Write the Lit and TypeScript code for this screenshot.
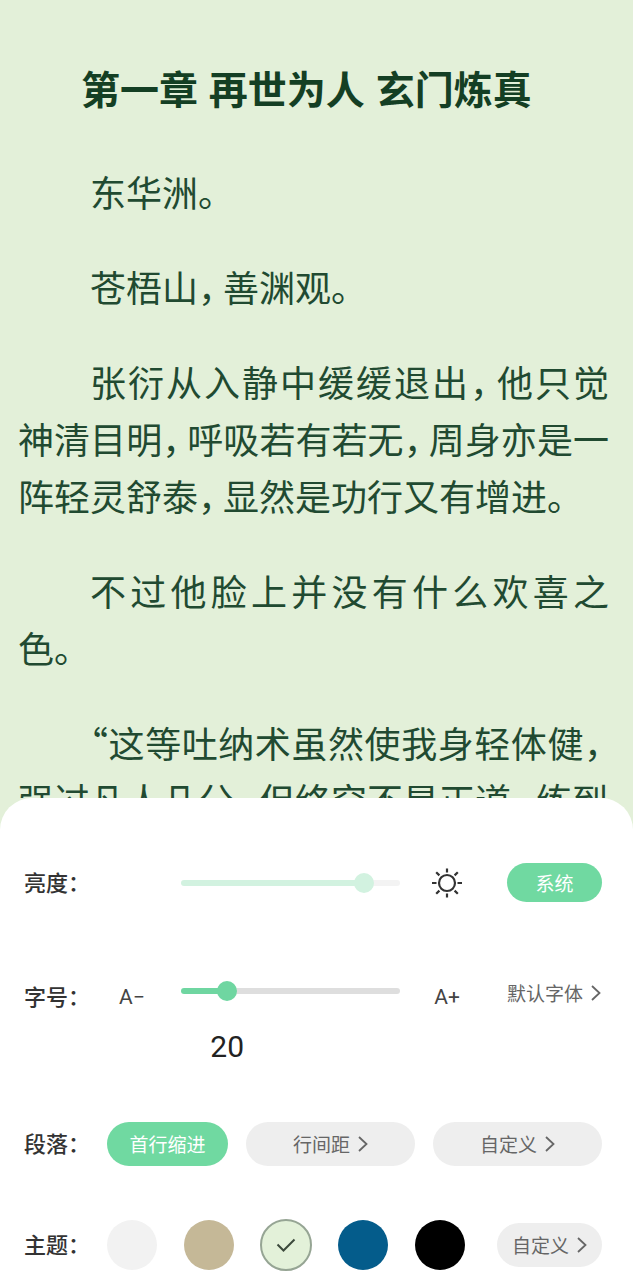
import { LitElement, html, css, svg } from "lit";
import { customElement, property, state } from "lit/decorators.js";
import { styleMap } from "lit/directives/style-map.js";

const CHAPTER = {
  title: "第一章 再世为人 玄门炼真",
  paragraphs: [
    "东华洲。",
    "苍梧山，善渊观。",
    "张衍从入静中缓缓退出，他只觉神清目明，呼吸若有若无，周身亦是一阵轻灵舒泰，显然是功行又有增进。",
    "不过他脸上并没有什么欢喜之色。",
    "“这等吐纳术虽然使我身轻体健，强过凡人几分，但终究不是正道，练到",
  ],
};

const THEMES = [
  { id: "light", name: "浅灰", color: "#f2f2f2" },
  { id: "sand", name: "羊皮纸", color: "#c5b897" },
  { id: "green", name: "护眼绿", color: "#e3f1d9" },
  { id: "blue", name: "深蓝", color: "#045c8b" },
  { id: "black", name: "夜间", color: "#000000" },
];

const chevron = html`<svg class="chevron" viewBox="0 0 10 16" aria-hidden="true">
  ${svg`<path d="M1 1 L8.5 8 L1 15" fill="none" stroke="currentColor" stroke-width="1.8"/>`}
</svg>`;

const sun = html`<svg class="sun" viewBox="0 0 32 32" role="img" aria-label="亮度">
  ${svg`<g fill="none" stroke="#333" stroke-width="2.2">
    <circle cx="16" cy="16" r="8"/>
    <path d="M16 1.5v4M16 26.5v4M1 16h4.5M26.5 16H31M5.2 5.2l3.2 3.2M23.6 23.6l3.2 3.2M26.8 5.2l-3.2 3.2M8.4 23.6l-3.2 3.2"/>
  </g>`}
</svg>`;

@customElement("reader-page")
class ReaderPage extends LitElement {
  static styles = css`
    :host {
      display: block;
      box-sizing: border-box;
      padding: 62px 24px 0 18px;
      overflow: hidden;
      color: #214a31;
      font-family: "Noto Sans CJK SC", sans-serif;
    }
    .title {
      margin: 0 0 44px;
      padding-left: 63px;
      font: 700 39px/57px "Liberation Sans", "Noto Sans CJK SC", sans-serif;
      color: #143f24;
    }
    .para {
      margin: 0 0 38px;
      font-size: 36px;
      line-height: 57px;
      text-indent: 2em;
      text-align: justify;
    }
    .comma {
      font-feature-settings: "halt";
      margin-right: 7px;
    }
    .quote {
      font-feature-settings: "halt";
    }
  `;

  private mark(text: string) {
    return text.split(/([，“])/).map((part) =>
      part === "，"
        ? html`<span class="comma">，</span>`
        : part === "“"
          ? html`<span class="quote">“</span>`
          : part
    );
  }

  render() {
    return html`<h1 class="title">${CHAPTER.title}</h1>
      ${CHAPTER.paragraphs.map((p) => html`<p class="para">${this.mark(p)}</p>`)}`;
  }
}

@customElement("settings-sheet")
class SettingsSheet extends LitElement {
  @property({ type: Number }) fontSize = 20;
  @state() private brightness = 87;
  @state() private theme = "green";

  static styles = css`
    :host {
      display: block;
      box-sizing: border-box;
      padding: 65px 31px 16px 24px;
      background: #fff;
      border-radius: 32px 32px 0 0;
      color: #333;
      font-family: "Noto Sans CJK SC", sans-serif;
    }
    .row {
      display: grid;
      grid-template-columns: 95px 62px minmax(0, 1fr) 94px 108px;
      align-items: center;
    }
    .brightness {
      height: 39px;
      margin-bottom: 79px;
    }
    .brightness .slider {
      grid-column: 3;
    }
    .size {
      align-items: start;
      margin-bottom: 57px;
    }
    .line {
      display: flex;
      align-items: center;
    }
    .paragraph {
      gap: 18px;
      height: 44px;
      margin-bottom: 53px;
    }
    .paragraph .label {
      width: 65px;
      flex: none;
    }
    .themes {
      height: 52px;
      justify-content: space-between;
    }
    .themes .label {
      width: 57px;
    }
    .label {
      padding-bottom: 4px;
      font-size: 22px;
      line-height: 28px;
      font-weight: 500;
      white-space: nowrap;
      font-feature-settings: "halt";
    }
    button {
      display: flex;
      align-items: center;
      justify-content: center;
      gap: 8px;
      margin: 0;
      padding: 0;
      border: 0;
      background: none;
      color: #666;
      font: 400 19px/24px "Noto Sans CJK SC", sans-serif;
      white-space: nowrap;
      cursor: pointer;
    }
    .pill {
      height: 44px;
      border-radius: 22px;
      background: #eee;
    }
    .pill.on {
      background: #70d9a1;
      color: #fff;
    }
    .system {
      height: 39px;
      margin-left: 13px;
    }
    .indent {
      width: 121px;
      flex: none;
    }
    .wide {
      flex: 1;
    }
    .custom {
      width: 105px;
    }
    .font {
      margin-left: 13px;
      justify-self: start;
    }
    .step {
      color: #444;
      font: 400 21px/32px Roboto, sans-serif;
    }
    .minus {
      justify-self: start;
    }
    .plus {
      justify-self: center;
    }
    .chevron {
      width: 10px;
      height: 16px;
    }
    .sun {
      width: 32px;
      height: 32px;
      justify-self: center;
    }
    .slider {
      --fill: #6fd6a1;
      --track: #dedede;
      appearance: none;
      width: 100%;
      height: 20px;
      margin: 0;
      background: none;
    }
    .slider.faint {
      --fill: #d2f2e0;
      --track: #f3f3f3;
    }
    .slider::-webkit-slider-runnable-track {
      height: 6px;
      border-radius: 3px;
      background: linear-gradient(
        to right,
        var(--fill) calc(10px + (100% - 20px) * var(--ratio)),
        var(--track) calc(10px + (100% - 20px) * var(--ratio))
      );
    }
    .slider::-webkit-slider-thumb {
      appearance: none;
      width: 20px;
      height: 20px;
      margin-top: -7px;
      border-radius: 50%;
      background: var(--fill);
    }
    .value {
      grid-column: 3;
      justify-self: start;
      width: 36px;
      margin-top: 16px;
      margin-left: calc((100% - 20px) * var(--ratio) - 8px);
      text-align: center;
      color: #222;
      font: 400 30px/36px Roboto, sans-serif;
    }
    .choices {
      display: flex;
      align-items: center;
      gap: 25px;
    }
    .swatch {
      position: relative;
      display: grid;
      place-items: center;
      width: 52px;
      height: 52px;
    }
    .swatch input {
      appearance: none;
      width: 50px;
      height: 50px;
      margin: 0;
      border-radius: 50%;
      background: var(--swatch);
      cursor: pointer;
    }
    .swatch input:checked {
      width: 52px;
      height: 52px;
      border: 2px solid #96a594;
    }
    .check {
      position: absolute;
      width: 20px;
      height: 16px;
      pointer-events: none;
    }
  `;

  render() {
    const bright = { "--ratio": String(this.brightness / 100) };
    const size = { "--ratio": String((this.fontSize - 12) / 44) };
    return html`
      <div class="row brightness">
        <label class="label" for="brightness">亮度：</label>
        <input
          class="slider faint"
          id="brightness"
          type="range"
          min="0"
          max="100"
          .value=${String(this.brightness)}
          style=${styleMap(bright)}
          @input=${(e: Event) => (this.brightness = Number((e.target as HTMLInputElement).value))}
        />
        ${sun}
        <button class="pill on system">系统</button>
      </div>

      <div class="row size">
        <label class="label" for="size">字号：</label>
        <button class="step minus" @click=${() => (this.fontSize = Math.max(12, this.fontSize - 1))}>A−</button>
        <input
          class="slider"
          id="size"
          type="range"
          min="12"
          max="56"
          .value=${String(this.fontSize)}
          style=${styleMap(size)}
          @input=${(e: Event) => (this.fontSize = Number((e.target as HTMLInputElement).value))}
        />
        <button class="step plus" @click=${() => (this.fontSize = Math.min(56, this.fontSize + 1))}>A+</button>
        <button class="font">默认字体${chevron}</button>
        <output class="value" for="size" style=${styleMap(size)}>${this.fontSize}</output>
      </div>

      <div class="line paragraph" role="group" aria-labelledby="paragraph-label">
        <span class="label" id="paragraph-label">段落：</span>
        <button class="pill on indent">首行缩进</button>
        <button class="pill wide">行间距${chevron}</button>
        <button class="pill wide">自定义${chevron}</button>
      </div>

      <div class="line themes">
        <div class="choices" role="radiogroup" aria-labelledby="theme-label">
          <span class="label" id="theme-label">主题：</span>
          ${THEMES.map(
            (t) => html`<span class="swatch">
              <input
                type="radio"
                name="theme"
                id=${t.id}
                aria-label=${t.name}
                .checked=${t.id === this.theme}
                style=${styleMap({ "--swatch": t.color })}
                @change=${() => (this.theme = t.id)}
              />
              ${t.id === this.theme
                ? html`<svg class="check" viewBox="0 0 20 16" aria-hidden="true">
                    ${svg`<path d="M1.5 7.5 L7.5 13.5 L18.5 2.5" fill="none" stroke="#3c4a3c" stroke-width="2"/>`}
                  </svg>`
                : null}
            </span>`
          )}
        </div>
        <button class="pill custom">自定义${chevron}</button>
      </div>
    `;
  }
}

@customElement("app-root")
class AppRoot extends LitElement {
  static styles = css`
    :host {
      display: block;
      padding-right: 3px;
      background: #fff;
    }
    .screen {
      display: flex;
      flex-direction: column;
      height: 100vh;
      background: #e3f0d9;
    }
    .page {
      flex: 1 1 0;
      min-height: 0;
    }
    .sheet {
      flex: none;
    }
  `;

  render() {
    return html`<main class="screen">
      <reader-page class="page"></reader-page>
      <settings-sheet class="sheet"></settings-sheet>
    </main>`;
  }
}
